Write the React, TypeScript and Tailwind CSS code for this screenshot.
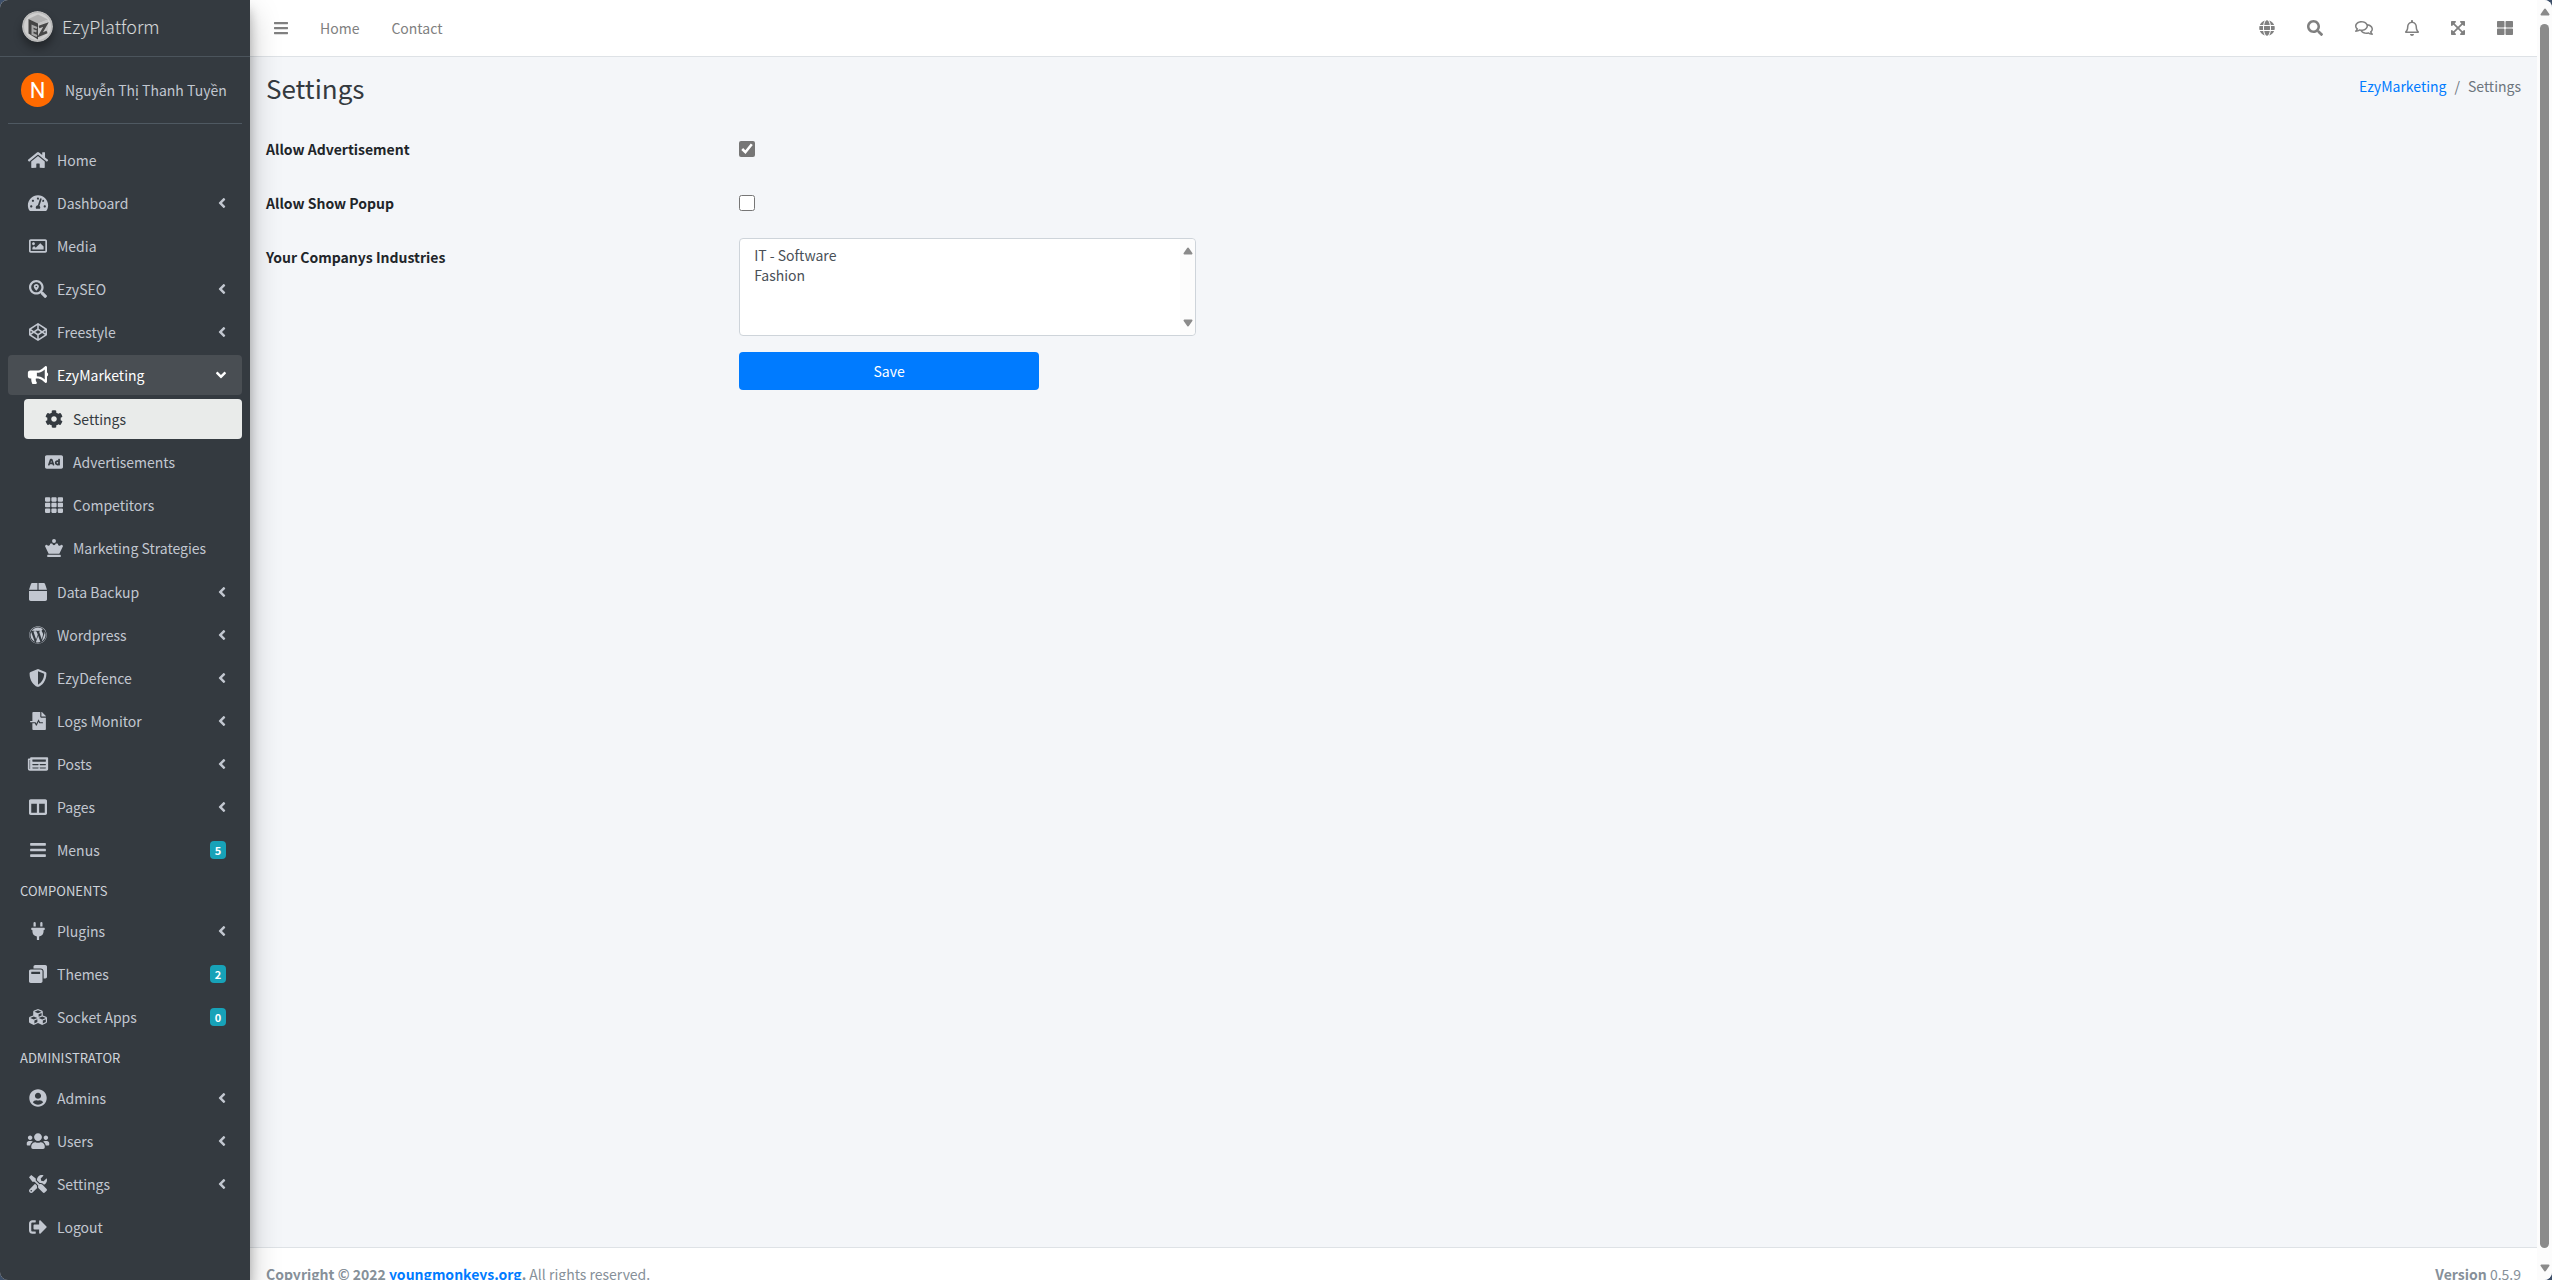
import type { ReactNode } from "react";
import type { IconType } from "react-icons";
import {
  FaAd,
  FaAngleDown,
  FaAngleLeft,
  FaBars,
  FaBox,
  FaBullhorn,
  FaChessQueen,
  FaCodepen,
  FaCog,
  FaColumns,
  FaCubes,
  FaExpandArrowsAlt,
  FaFileMedicalAlt,
  FaGlobe,
  FaHome,
  FaNewspaper,
  FaPlug,
  FaRegBell,
  FaRegComments,
  FaRegImage,
  FaSearch,
  FaSearchLocation,
  FaShieldAlt,
  FaSignOutAlt,
  FaTachometerAlt,
  FaTh,
  FaThLarge,
  FaTools,
  FaUserCircle,
  FaUsers,
  FaWindowRestore,
  FaWordpress,
} from "react-icons/fa";

type MenuItem = {
  label: string;
  icon: IconType;
  badge?: number;
  expandable?: boolean;
  children?: MenuItem[];
};

const mainMenu: MenuItem[] = [
  { label: "Home", icon: FaHome },
  { label: "Dashboard", icon: FaTachometerAlt, expandable: true },
  { label: "Media", icon: FaRegImage },
  { label: "EzySEO", icon: FaSearchLocation, expandable: true },
  { label: "Freestyle", icon: FaCodepen, expandable: true },
  {
    label: "EzyMarketing",
    icon: FaBullhorn,
    children: [
      { label: "Settings", icon: FaCog },
      { label: "Advertisements", icon: FaAd },
      { label: "Competitors", icon: FaTh },
      { label: "Marketing Strategies", icon: FaChessQueen },
    ],
  },
  { label: "Data Backup", icon: FaBox, expandable: true },
  { label: "Wordpress", icon: FaWordpress, expandable: true },
  { label: "EzyDefence", icon: FaShieldAlt, expandable: true },
  { label: "Logs Monitor", icon: FaFileMedicalAlt, expandable: true },
  { label: "Posts", icon: FaNewspaper, expandable: true },
  { label: "Pages", icon: FaColumns, expandable: true },
  { label: "Menus", icon: FaBars, badge: 5 },
];

const componentsMenu: MenuItem[] = [
  { label: "Plugins", icon: FaPlug, expandable: true },
  { label: "Themes", icon: FaWindowRestore, badge: 2 },
  { label: "Socket Apps", icon: FaCubes, badge: 0 },
];

const adminMenu: MenuItem[] = [
  { label: "Admins", icon: FaUserCircle, expandable: true },
  { label: "Users", icon: FaUsers, expandable: true },
  { label: "Settings", icon: FaTools, expandable: true },
  { label: "Logout", icon: FaSignOutAlt },
];

const toolbar = [
  { label: "Language", icon: FaGlobe, width: "w-4" },
  { label: "Search", icon: FaSearch, width: "w-4" },
  { label: "Messages", icon: FaRegComments, width: "w-[18px]" },
  { label: "Notifications", icon: FaRegBell, width: "w-[14px]" },
  { label: "Fullscreen", icon: FaExpandArrowsAlt, width: "w-[14px]" },
  { label: "Control sidebar", icon: FaThLarge, width: "w-4" },
];

function Logo() {
  return (
    <svg
      viewBox="0 0 62 62"
      className="h-[31px] w-[31px] rounded-full shadow-[0_6px_8px_rgba(0,0,0,0.35)]"
      aria-hidden="true"
    >
      <circle cx="31" cy="31" r="31" fill="#b9b9b9" />
      <circle cx="31" cy="31" r="27" fill="#cfcfcf" />
      <path d="M32 7 52 17 32 25 13 16z" fill="#b0b0b0" />
      <path d="M13 16 32 25v32L13 45z" fill="#444" />
      <path d="M32 25 52 17v27L32 57z" fill="#c4c4c4" />
      <path d="M30 34 21 30v16l9 4M21 38l8 3" fill="none" stroke="#a8a8a8" strokeWidth="4" />
      <path d="M34 32 48 27 36 48 50 42" fill="none" stroke="#484848" strokeWidth="5" />
    </svg>
  );
}

type MenuLinkProps = {
  item: MenuItem;
  open?: boolean;
  active?: boolean;
  nested?: boolean;
};

function MenuLink({ item, open, active, nested }: MenuLinkProps) {
  const Icon = item.icon;
  let state = "text-[#c2c7d0]";
  if (open) state = "bg-[#494e53] text-white";
  if (active) state = "bg-[#e9ebea] text-[#343a40]";

  return (
    <a href="#" className={`flex h-10 items-center rounded px-4 ${nested ? "ml-4" : ""} ${state}`}>
      <span className="mr-[5px] w-7">
        <Icon className="h-[18px] w-full" />
      </span>
      <span className="flex-1 whitespace-nowrap">{item.label}</span>
      {item.expandable && <FaAngleLeft className="h-4 w-2" />}
      {open && <FaAngleDown className="h-4 w-[10px]" />}
      {item.badge !== undefined && (
        <span className="flex h-[18px] w-4 items-center justify-center rounded bg-[#17a2b8] text-[11px] font-bold text-white">
          {item.badge}
        </span>
      )}
    </a>
  );
}

function Menu({ items }: { items: MenuItem[] }) {
  return (
    <ul>
      {items.map((item) => (
        <li key={item.label} className="mb-[3px]">
          <MenuLink item={item} open={!!item.children} />
          {item.children && (
            <ul className="my-1 flex flex-col gap-[3px]">
              {item.children.map((child, i) => (
                <li key={child.label}>
                  <MenuLink item={child} active={i === 0} nested />
                </li>
              ))}
            </ul>
          )}
        </li>
      ))}
    </ul>
  );
}

function MenuHeader({ children }: { children: ReactNode }) {
  return <h2 className="flex h-[38px] items-center px-3 pb-1 text-[13px] text-[#d0d4db]">{children}</h2>;
}

function Sidebar() {
  return (
    <aside className="z-10 flex w-[250px] shrink-0 flex-col bg-[#343a40] text-[#c2c7d0] shadow-[0_14px_28px_rgba(0,0,0,0.25),0_10px_10px_rgba(0,0,0,0.22)]">
      <a
        href="#"
        className="flex h-[57px] items-center gap-[9px] border-b border-[#4b545c] px-[22px] pb-1 text-[18px] font-light text-white/80"
      >
        <Logo />
        EzyPlatform
      </a>
      <div className="mx-2 mb-4 flex h-[67px] items-center border-b border-[#4f5962] pl-[13px]">
        <span className="mr-[11px] flex h-[34px] w-[33px] items-center justify-center rounded-full bg-[#ff6a00] font-['Roboto',sans-serif] text-[22px] text-white">
          N
        </span>
        <a href="#" className="whitespace-nowrap">
          Nguyễn Thị Thanh Tuyền
        </a>
      </div>
      <nav className="px-2">
        <Menu items={mainMenu} />
        <MenuHeader>COMPONENTS</MenuHeader>
        <Menu items={componentsMenu} />
        <MenuHeader>ADMINISTRATOR</MenuHeader>
        <Menu items={adminMenu} />
      </nav>
    </aside>
  );
}

function Topbar() {
  return (
    <header className="flex h-[57px] shrink-0 items-center justify-between border-b border-[#dee2e6] bg-white px-2 text-[#808080]">
      <nav className="flex items-center">
        <button type="button" aria-label="Toggle menu" className="px-4">
          <FaBars className="h-4 w-[14px]" />
        </button>
        <a href="#" className="px-4">
          Home
        </a>
        <a href="#" className="px-4">
          Contact
        </a>
      </nav>
      <div className="flex items-center">
        {toolbar.map(({ label, icon: Icon, width }) => (
          <button key={label} type="button" aria-label={label} className="px-4">
            <Icon className={`h-4 ${width}`} />
          </button>
        ))}
      </div>
    </header>
  );
}

function SettingsForm() {
  return (
    <form className="grid w-5/6 grid-cols-4">
      <label htmlFor="allowAdvertisement" className="mb-4 flex h-[38px] items-center px-2 font-bold">
        Allow Advertisement
      </label>
      <div className="col-span-3 flex h-[38px] items-center px-2">
        <input id="allowAdvertisement" type="checkbox" defaultChecked className="h-4 w-4 accent-[#767676]" />
      </div>

      <label htmlFor="allowShowPopup" className="mb-4 flex h-[38px] items-center px-2 font-bold">
        Allow Show Popup
      </label>
      <div className="col-span-3 flex h-[38px] items-center px-2">
        <input id="allowShowPopup" type="checkbox" className="h-4 w-4" />
      </div>

      <label htmlFor="industries" className="flex h-[38px] items-center px-2 font-bold">
        Your Companys Industries
      </label>
      <div className="px-2">
        <div className="relative mb-4">
          <select
            id="industries"
            multiple
            className="block h-[98px] w-full overflow-hidden rounded border border-[#ced4da] bg-white px-3 py-[6px] text-[#495057]"
          >
            <option className="p-0 px-[2px] leading-[21px]">IT - Software</option>
            <option className="p-0 px-[2px] leading-[21px]">Fashion</option>
          </select>
          <div className="absolute inset-y-px right-px flex w-[15px] flex-col items-center justify-between rounded-r bg-[#fcfcfc] py-2">
            <ScrollArrow />
            <ScrollArrow down />
          </div>
        </div>
      </div>

      <div className="col-span-3 col-start-2 px-2">
        <button type="button" className="h-[38px] w-[300px] rounded bg-[#007bff] text-white">
          Save
        </button>
      </div>
    </form>
  );
}

function ScrollArrow({ down }: { down?: boolean }) {
  return (
    <svg viewBox="0 0 20 16" className={`h-2 w-[10px] shrink-0 ${down ? "rotate-180" : ""}`} aria-hidden="true">
      <path d="M10 3 17 13H3z" fill="#8b8b8b" stroke="#8b8b8b" strokeWidth="4" strokeLinejoin="round" />
    </svg>
  );
}

function PageScrollbar() {
  return (
    <div className="flex w-[15px] shrink-0 flex-col items-center bg-[#fcfcfc] py-2" aria-hidden="true">
      <ScrollArrow />
      <div className="mt-2 mb-4 w-[9px] flex-1 rounded-full bg-[#8b8b8b]" />
      <ScrollArrow down />
    </div>
  );
}

export default function App() {
  return (
    <div className="bg-[#3d4f69] font-['Noto_Sans_CJK_SC','Noto_Sans',sans-serif] text-[14px] leading-[21px] text-[#212529]">
      <div className="flex h-screen overflow-hidden rounded-lg bg-[#f4f6f9]">
        <Sidebar />
        <div className="flex min-w-0 flex-1 flex-col">
          <Topbar />
          <main className="flex-1 px-2">
            <div className="flex h-[73px] items-start justify-between px-2 pt-[13px]">
              <h1 className="text-[26px] leading-9 text-[#343a40]">Settings</h1>
              <nav aria-label="Breadcrumb" className="flex gap-2 pt-[6px] text-[#6c757d]">
                <a href="#" className="text-[#007bff]">
                  EzyMarketing
                </a>
                <span>/</span>
                <span>Settings</span>
              </nav>
            </div>
            <SettingsForm />
          </main>
          <footer className="flex h-[33px] shrink-0 justify-between overflow-hidden border-t border-[#dee2e6] bg-white px-4 pt-4 whitespace-nowrap text-[#869099]">
            <p>
              <strong>
                Copyright © 2022{" "}
                <a href="#" className="text-[#007bff]">
                  youngmonkeys.org
                </a>
                .
              </strong>{" "}
              All rights reserved.
            </p>
            <p>
              <b>Version</b> 0.5.9
            </p>
          </footer>
        </div>
        <PageScrollbar />
      </div>
    </div>
  );
}
